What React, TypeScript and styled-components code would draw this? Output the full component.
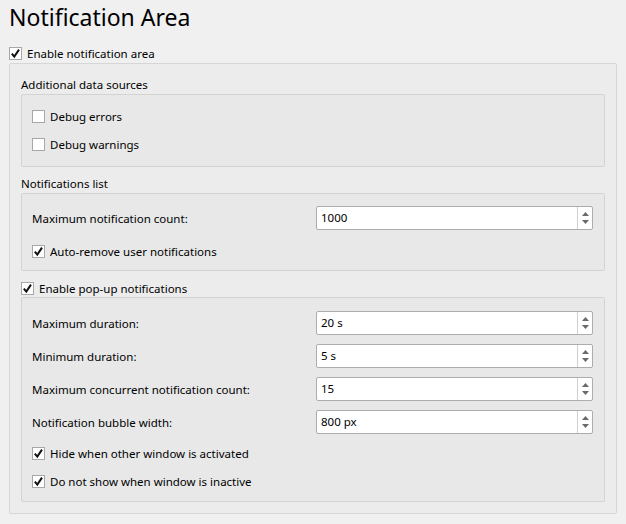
import React from "react";
import styled, { createGlobalStyle } from "styled-components";

const Global = createGlobalStyle`
  html, body { margin: 0; padding: 0; background: #f0f0f0; }
  body {
    font-family: "Noto Sans", "Open Sans", sans-serif;
    font-size: 11.5px;
    color: #000;
  }
`;

const Page = styled.div`
  width: 626px;
  height: 524px;
  box-sizing: border-box;
  padding: 0 9px;
  display: flex;
  flex-direction: column;
`;

const Title = styled.h1`
  margin: 0;
  height: 43px;
  box-sizing: border-box;
  padding-top: 2px;
  font-weight: 400;
  font-size: 23px;
  line-height: 30px;
`;

const Frame = styled.div`
  border: 1px solid #d6d6d6;
  border-radius: 2px;
  background: #ececec;
  padding: 11px;
  display: flex;
  flex-direction: column;
`;

const SectionLabel = styled.div<{ $first?: boolean }>`
  height: 19px;
  line-height: 19px;
  margin-top: ${(p) => (p.$first ? "0" : "7px")};
`;

const Group = styled.div<{ $pt: number; $pb: number }>`
  border: 1px solid #d3d3d3;
  border-radius: 2px;
  background: #e8e8e8;
  padding: ${(p) => p.$pt}px 11px ${(p) => p.$pb}px 10px;
  display: flex;
  flex-direction: column;
`;

const CheckRow = styled.label<{ $h?: number; $mt?: number }>`
  display: flex;
  align-items: center;
  gap: 5px;
  height: ${(p) => p.$h ?? 20}px;
  margin-top: ${(p) => p.$mt ?? 0}px;
  white-space: nowrap;
`;

const Box = styled.span`
  width: 13px;
  height: 13px;
  box-sizing: border-box;
  border: 1px solid #a8a8a8;
  background: #fff;
  display: inline-flex;
  align-items: center;
  justify-content: center;
  flex: none;
`;

const FieldRow = styled.div<{ $mt?: number }>`
  display: grid;
  grid-template-columns: 1fr 277px;
  align-items: center;
  height: 24px;
  margin-top: ${(p) => p.$mt ?? 0}px;
`;

const Spin = styled.div`
  height: 24px;
  box-sizing: border-box;
  border: 1px solid #adadad;
  border-radius: 2px;
  background: #fff;
  display: flex;
`;

const SpinValue = styled.div`
  flex: 1;
  padding-left: 4px;
  line-height: 22px;
`;

const SpinButtons = styled.div`
  width: 14px;
  border-left: 1px solid #d0d0d0;
  display: flex;
  flex-direction: column;
  align-items: center;
  justify-content: center;
  gap: 4px;
`;

function Check({ checked }: { checked: boolean }) {
  return (
    <Box>
      {checked && (
        <svg width="11" height="11" viewBox="0 0 11 11">
          <path d="M1.8 5.6 L4.3 8.6 L9 1.6" fill="none" stroke="#111" strokeWidth="2" />
        </svg>
      )}
    </Box>
  );
}

function CheckItem({ label, checked, h, mt }: { label: string; checked: boolean; h?: number; mt?: number }) {
  return (
    <CheckRow $h={h} $mt={mt}>
      <Check checked={checked} />
      <span>{label}</span>
    </CheckRow>
  );
}

function SpinField({ label, value, mt }: { label: string; value: string; mt?: number }) {
  return (
    <FieldRow $mt={mt}>
      <span>{label}</span>
      <Spin>
        <SpinValue>{value}</SpinValue>
        <SpinButtons>
          <svg width="7" height="4" viewBox="0 0 7 4">
            <path d="M0 4 L3.5 0 L7 4 Z" fill="#6a6a6a" />
          </svg>
          <svg width="7" height="4" viewBox="0 0 7 4">
            <path d="M0 0 L7 0 L3.5 4 Z" fill="#6a6a6a" />
          </svg>
        </SpinButtons>
      </Spin>
    </FieldRow>
  );
}

export default function App() {
  return (
    <>
      <Global />
      <Page>
        <Title>Notification Area</Title>
        <CheckItem label="Enable notification area" checked h={20} />
        <Frame>
          <SectionLabel $first>Additional data sources</SectionLabel>
          <Group $pt={11} $pb={12}>
            <CheckItem label="Debug errors" checked={false} />
            <CheckItem label="Debug warnings" checked={false} mt={8} />
          </Group>
          <SectionLabel>Notifications list</SectionLabel>
          <Group $pt={12} $pb={9}>
            <SpinField label="Maximum notification count:" value="1000" />
            <CheckItem label="Auto-remove user notifications" checked mt={11} />
          </Group>
          <CheckItem label="Enable pop-up notifications" checked h={18} mt={8} />
          <Group $pt={13} $pb={10}>
            <SpinField label="Maximum duration:" value="20 s" />
            <SpinField label="Minimum duration:" value="5 s" mt={9} />
            <SpinField label="Maximum concurrent notification count:" value="15" mt={9} />
            <SpinField label="Notification bubble width:" value="800 px" mt={9} />
            <CheckItem label="Hide when other window is activated" checked mt={9} />
            <CheckItem label="Do not show when window is inactive" checked mt={8} />
          </Group>
        </Frame>
      </Page>
    </>
  );
}
